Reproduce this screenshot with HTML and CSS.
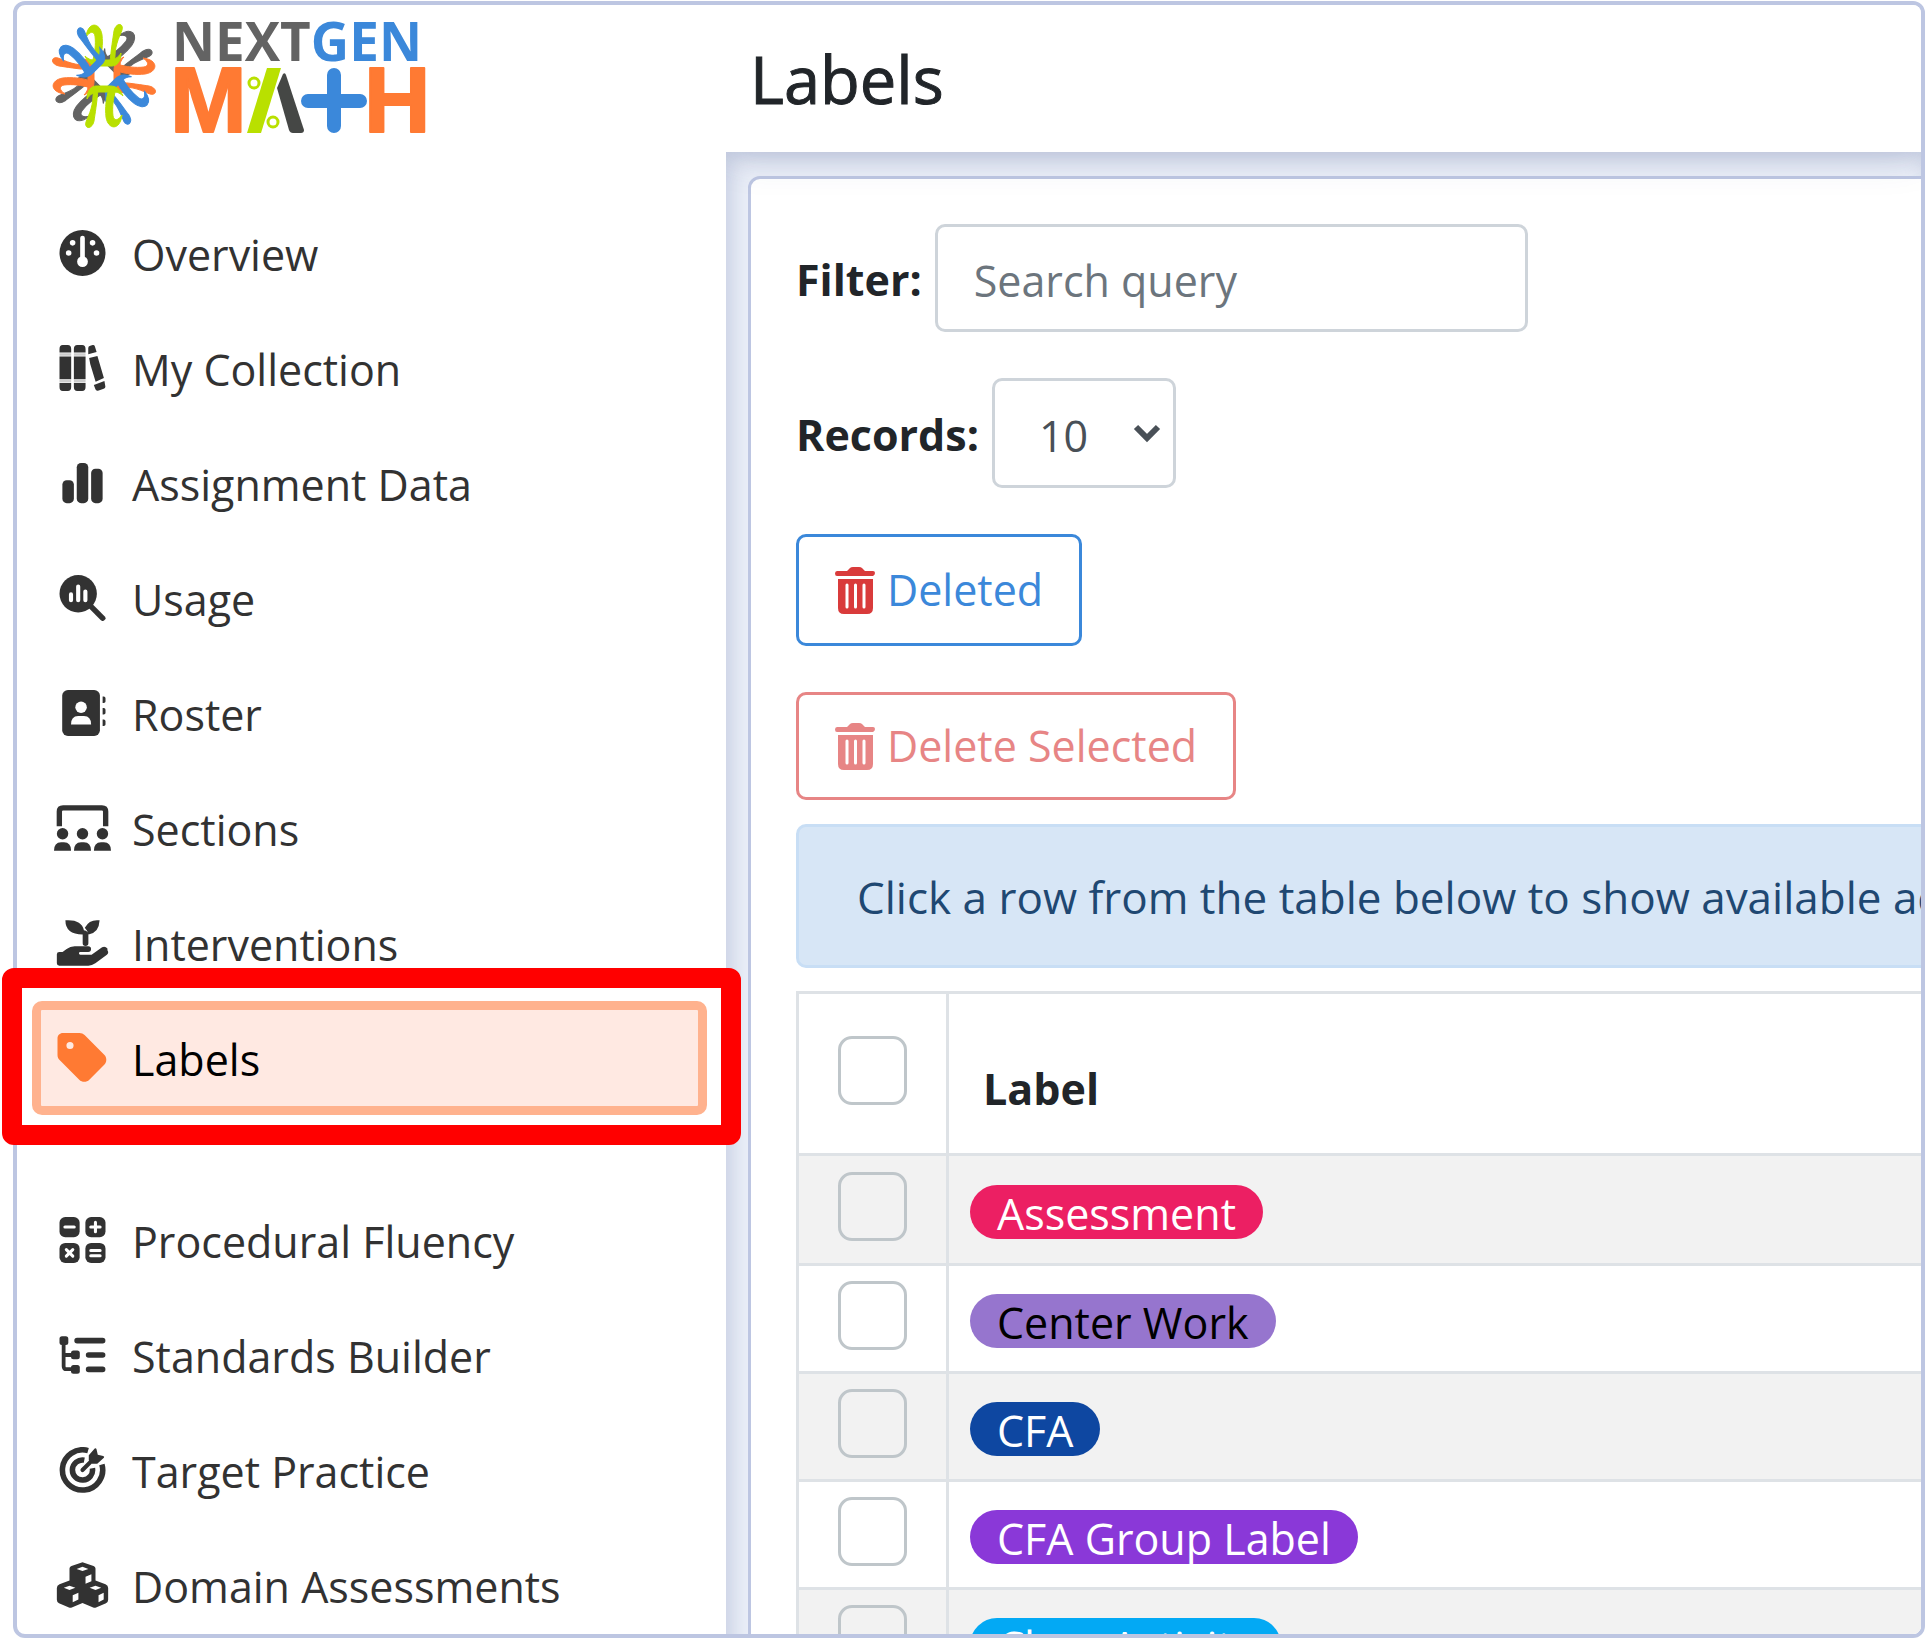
FILE: index.html
```html
<!DOCTYPE html>
<html lang="en">
<head>
    <meta charset="UTF-8">
    <meta name="viewport" content="width=device-width, initial-scale=1.0">
    <title>Labels - NextGen Math</title>
    <link rel="stylesheet" href="styles.css">
</head>
<body>
    <div class="app">
        <aside class="sidebar">
            <a class="logo" href="#" aria-label="NextGen Math">
                <svg width="376" height="120" viewBox="48 16 376 120">
                    <defs>
                        <g id="pi" fill="currentColor" stroke="currentColor" stroke-width="1">
                            <path d="M-5-13C-2-22-1-32-2-41C-4-54-16-55-18-39C-14-45-10-45-9-40C-8-32-9-22-12-13Z"/>
                            <path d="M6-13C7-26 9-38 10-45C12-54 20-53 18-46C15-38 10-30 11-13Z"/>
                            <path d="M-19-20C-15-16-12-16-8-16L4-16C10-16 14-18 17-23C17-15 13-10 8-10L-6-10C-12-10-16-13-19-20Z"/>
                        </g>
                    </defs>
                    <g transform="translate(104 76)">
                        <use href="#pi" color="#636363" transform="rotate(45)"/>
                        <use href="#pi" color="#ff7a33" transform="rotate(90)"/>
                        <use href="#pi" color="#3b88da" transform="rotate(135)"/>
                        <use href="#pi" color="#636363" transform="rotate(225)"/>
                        <use href="#pi" color="#ff7a33" transform="rotate(270)"/>
                        <use href="#pi" color="#b9e000" transform="rotate(180)"/>
                        <use href="#pi" color="#b9e000"/>
                        <use href="#pi" color="#3b88da" transform="rotate(315)"/>
                    </g>
                    <text class="logo-top" x="172" y="61"><tspan fill="#636363">NEXT</tspan><tspan fill="#3b88da">GEN</tspan></text>
                    <text class="logo-bottom" x="170" y="132">M</text>
                    <path d="M267 68h14l-20 65h-14z" fill="#b9e000"/>
                    <circle cx="254" cy="83" r="5" fill="none" stroke="#b9e000" stroke-width="3"/>
                    <circle cx="273" cy="122" r="5" fill="none" stroke="#b9e000" stroke-width="3"/>
                    <path d="M277 88l6-14q2-2 3 1l18 55q0 3-3 3h-8q-3 0-4-3z" fill="#454745"/>
                    <path d="M334 75v51M308 101h52" stroke="#3b88da" stroke-width="14" stroke-linecap="round"/>
                    <text class="logo-bottom" x="364" y="132">H</text>
                </svg>
            </a>
            <nav>
                <ul class="nav-list">
                    <li><a href="#">
                        <svg class="icon" viewBox="0 0 512 512"><circle cx="256" cy="256" r="256"/><g fill="#fff"><circle cx="146" cy="143" r="31"/><circle cx="368" cy="143" r="31"/><circle cx="102" cy="256" r="31"/><circle cx="412" cy="256" r="31"/><circle cx="256" cy="352" r="60"/><rect x="230" y="64" width="52" height="290" rx="26"/></g></svg>
                        <span>Overview</span></a></li>
                    <li><a href="#">
                        <svg class="icon" viewBox="0 0 512 512"><path d="M0 84V44Q0 0 36 0h56q38 0 38 44v40zM0 128h130v254H0zM0 424h130v44q0 44-38 44H36q-36 0-36-44zM160 84V44q0-44 38-44h54q38 0 38 44v40zM160 128h130v254H160zM160 424h130v44q0 44-38 44h-54q-38 0-38-44zM320 104V34q0-20 22-26l28-7q18-3 24 16l19 62zM330 146l92-24 72 246-92 40-60-196zM382 446l118-46 10 58q4 22-18 29l-64 22q-22 4-28-16z"/><path d="M0 92h130v28H0zM160 92h130v28H160zM0 390h130v28H0zM160 390h130v28H160z" fill="#ccc"/></svg>
                        <span>My Collection</span></a></li>
                    <li><a href="#">
                        <svg class="icon" viewBox="0 0 512 512"><rect x="32" y="224" width="128" height="256" rx="48"/><rect x="192" y="32" width="128" height="448" rx="48"/><rect x="352" y="96" width="128" height="384" rx="48"/></svg>
                        <span>Assignment Data</span></a></li>
                    <li><a href="#">
                        <svg class="icon" viewBox="0 0 512 512"><circle cx="208" cy="208" r="208"/><path d="M330 330L480 480" stroke="#323232" stroke-width="62" stroke-linecap="round"/><path d="M128 216v64M208 128v152M288 184v96" stroke="#fff" stroke-width="46" stroke-linecap="round"/></svg>
                        <span>Usage</span></a></li>
                    <li><a href="#">
                        <svg class="icon" viewBox="0 0 512 512"><rect x="30" width="420" height="512" rx="64"/><circle cx="240" cy="192" r="64" fill="#fff"/><path d="M128 384q0-96 80-96h64q80 0 80 96z" fill="#fff"/><path d="M480 72h12q20 0 20 20v36q0 16-20 16h-12zM480 200h12q20 0 20 20v36q0 16-20 16h-12zM480 328h12q20 0 20 20v36q0 16-20 16h-12z"/></svg>
                        <span>Roster</span></a></li>
                    <li><a href="#">
                        <svg class="icon" viewBox="0 0 640 512"><path d="M60 236V72q0-42 42-42h436q42 0 42 42v164" fill="none" stroke="#323232" stroke-width="60"/><circle cx="96" cy="320" r="64"/><circle cx="320" cy="320" r="64"/><circle cx="544" cy="320" r="64"/><path d="M0 512q0-96 80-96h32q80 0 80 96zM224 512q0-96 80-96h32q80 0 80 96zM448 512q0-96 80-96h32q80 0 80 96z"/></svg>
                        <span>Sections</span></a></li>
                    <li><a href="#">
                        <svg class="icon" viewBox="-32 0 640 512"><path d="M96 0h32q150 0 176 112 50 8 50 52v96q0 30-32 30t-32-30V160Q96 160 96 0zM480 0q-6 140-124 160-14-48-42-76Q360 0 450 0zM568 338q20 28-6 50L432 484q-38 28-78 28H28q-28 0-28-28V382q0-26 28-26h36l46-34q40-30 90-30h152q32 0 32 32t-32 32h-88q-16 0-16 16t16 16h126l118-84q36-14 60 14z"/></svg>
                        <span>Interventions</span></a></li>
                    <li class="active"><a href="#">
                        <svg class="icon icon-tag" viewBox="0 32 448 448"><path d="M0 80v149.500c0 17 6.700 33.300 18.700 45.300l176 176c25 25 65.500 25 90.500 0L418.700 317.300c25-25 25-65.500 0-90.500l-176-176c-12-12-28.300-18.700-45.300-18.700H48C21.500 32 0 53.500 0 80zm112 32a32 32 0 1 1 0 64 32 32 0 1 1 0-64z"/></svg>
                        <span>Labels</span></a></li>
                    <li class="group-start"><a href="#">
                        <svg class="icon" viewBox="0 0 512 512"><rect width="224" height="224" rx="64"/><rect x="288" width="224" height="224" rx="64"/><rect y="288" width="224" height="224" rx="64"/><rect x="288" y="288" width="224" height="224" rx="64"/><path d="M60 112h104M348 112h104M400 60v104M76 364l72 72M148 364l-72 72M348 372h104M348 432h104" stroke="#fff" stroke-width="34" stroke-linecap="round"/></svg>
                        <span>Procedural Fluency</span></a></li>
                    <li><a href="#">
                        <svg class="icon" viewBox="0 0 512 512"><rect y="46" width="98" height="98" rx="28"/><rect x="128" y="206" width="98" height="98" rx="28"/><rect x="128" y="366" width="98" height="98" rx="28"/><path d="M46 100v280q0 34 34 34h70M46 256h100" fill="none" stroke="#323232" stroke-width="42"/><path d="M196 96h284M324 256h156M324 416h156" stroke="#323232" stroke-width="62" stroke-linecap="round"/></svg>
                        <span>Standards Builder</span></a></li>
                    <li><a href="#">
                        <svg class="icon" viewBox="0 0 512 512"><path d="M318 40A224 224 0 1 0 472 194M276 146a112 112 0 1 0 90 90" fill="none" stroke="#323232" stroke-width="62"/><path d="M256 256L380 132" stroke="#323232" stroke-width="46" stroke-linecap="round"/><path d="M326 148V92l66-74q14-10 20 8l14 60 60 14q18 6 8 20l-74 66h-56z"/></svg>
                        <span>Target Practice</span></a></li>
                    <li><a href="#">
                        <svg class="icon" viewBox="-32 0 640 512"><path d="M288 0l124 44q22 8 22 28v134l112 42q30 12 30 42v132q0 28-24 38l-112 48q-16 6-32 0l-120-50-120 50q-16 6-32 0L24 460Q0 450 0 422V290q0-30 30-42l112-42V72q0-20 22-28z"/><path d="M222 76l66-24 66 24-66 24zM78 288l64-24 66 24-66 24zM368 288l66-24 64 24-64 24zM322 164l66-28v78l-66 28zM178 372l64-28v76l-64 30zM468 372l58-28v76l-58 30z" fill="#fff"/></svg>
                        <span>Domain Assessments</span></a></li>
                </ul>
            </nav>
        </aside>

        <main class="main">
            <header class="page-header">
                <h1>Labels</h1>
            </header>
            <div class="content">
                <section class="card">
                    <div class="toolbar">
                        <div class="field">
                            <label for="filter">Filter:</label>
                            <input type="text" id="filter" placeholder="Search query">
                        </div>
                        <div class="field">
                            <label for="records">Records:</label>
                            <div class="select-wrap">
                                <select id="records">
                                    <option>10</option>
                                    <option>25</option>
                                    <option>50</option>
                                </select>
                                <svg class="chevron" viewBox="0 0 28 20"><path d="M3 4l11 11L25 4" fill="none" stroke="#495057" stroke-width="6"/></svg>
                            </div>
                        </div>
                        <button type="button" class="btn btn-primary">
                            <svg class="trash" viewBox="0 0 40 47"><path d="M2 4h10l3-3q1-1 3-1h6q2 0 3 1l3 3h8q2 0 2 2t-2 3H2Q0 9 0 6.500T2 4zM3 12h35v29q0 6-6 6H9q-6 0-6-6z"/><path d="M12 18v22M20.500 18v22M29 18v22" stroke="#fff" stroke-width="3" stroke-linecap="round"/></svg>
                            Deleted
                        </button>
                        <button type="button" class="btn btn-danger" disabled>
                            <svg class="trash" viewBox="0 0 40 47"><path d="M2 4h10l3-3q1-1 3-1h6q2 0 3 1l3 3h8q2 0 2 2t-2 3H2Q0 9 0 6.500T2 4zM3 12h35v29q0 6-6 6H9q-6 0-6-6z"/><path d="M12 18v22M20.500 18v22M29 18v22" stroke="#fff" stroke-width="3" stroke-linecap="round"/></svg>
                            Delete Selected
                        </button>
                    </div>

                    <div class="alert">Click a row from the table below to show available actions</div>

                    <table class="labels-table">
                        <thead>
                            <tr>
                                <th class="check"><input type="checkbox" aria-label="Select all"></th>
                                <th>Label</th>
                            </tr>
                        </thead>
                        <tbody>
                            <tr>
                                <td class="check"><input type="checkbox" aria-label="Assessment"></td>
                                <td><span class="badge pink">Assessment</span></td>
                            </tr>
                            <tr>
                                <td class="check"><input type="checkbox" aria-label="Center Work"></td>
                                <td><span class="badge lavender">Center Work</span></td>
                            </tr>
                            <tr>
                                <td class="check"><input type="checkbox" aria-label="CFA"></td>
                                <td><span class="badge navy">CFA</span></td>
                            </tr>
                            <tr>
                                <td class="check"><input type="checkbox" aria-label="CFA Group Label"></td>
                                <td><span class="badge purple">CFA Group Label</span></td>
                            </tr>
                            <tr>
                                <td class="check"><input type="checkbox" aria-label="Class Activity"></td>
                                <td><span class="badge sky">Class Activity</span></td>
                            </tr>
                        </tbody>
                    </table>
                </section>
            </div>
        </main>
    </div>
</body>
</html>
```
FILE: styles.css
```css
* {
    box-sizing: border-box;
}

body {
    margin: 0;
    padding: 1px 0 1px 13px;
    height: 100vh;
    overflow: hidden;
    background: #fff;
    color: #212529;
    font-family: "Segoe UI", "Open Sans", "Noto Sans", sans-serif;
    font-size: 43px;
    line-height: 60px;
}

input, select, button {
    font: inherit;
}

.app {
    display: grid;
    grid-template-columns: 709px 1fr;
    grid-template-rows: minmax(0, 1fr);
    height: 100%;
    border: 4px solid #bdc6e2;
    border-radius: 12px;
}

/* Sidebar */
.sidebar {
    padding: 11px 19px 0 15px;
}

.logo {
    display: block;
    height: 120px;
    margin: 0 0 60px 16px;
}

.logo svg {
    display: block;
    overflow: visible;
}

.logo-top {
    font-size: 53px;
    font-weight: 700;
}

.logo-bottom {
    font-family: "Liberation Sans", sans-serif;
    font-size: 92px;
    font-weight: 700;
    fill: #ff7a33;
    stroke: #ff7a33;
    stroke-width: 2px;
    stroke-linejoin: round;
}

.nav-list {
    list-style: none;
    margin: 0;
    padding: 0;
}

.nav-list li {
    position: relative;
    margin-bottom: 1px;
}

.nav-list a {
    display: flex;
    align-items: center;
    gap: 21px;
    height: 114px;
    padding-left: 13px;
    border: 9px solid transparent;
    border-radius: 10px;
    color: #323232;
    text-decoration: none;
    white-space: nowrap;
}

.nav-list span {
    padding-top: 4px;
}

.nav-list .group-start {
    margin-top: 68px;
}

.nav-list .active a {
    background: #ffe9e2;
    border-color: #ffb28e;
    color: #000;
}

/* highlight around the current page */
.nav-list .active::after {
    content: "";
    position: absolute;
    inset: -33px -34px -30px -30px;
    border: 20px solid #f00;
    border-radius: 12px;
    z-index: 2;
    pointer-events: none;
}

.icon {
    width: 57px;
    height: 46px;
    flex: none;
    fill: #323232;
}

.icon-tag {
    height: 50px;
    fill: #ff7a33;
}

/* Main area */
.main {
    display: flex;
    flex-direction: column;
    min-width: 0;
    overflow: hidden;
    border-radius: 0 8px 8px 0;
}

.page-header {
    flex: none;
    height: 147px;
    padding: 29px 24px;
    background: #fff;
    box-shadow: 0 4px 40px rgba(60, 70, 120, 0.14);
    position: relative;
    z-index: 1;
}

h1 {
    margin: 0;
    font-size: 65px;
    line-height: 90px;
    font-weight: 500;
    -webkit-text-stroke: 1px #212529;
}

.content {
    flex: 1;
    padding: 24px 0 0 22px;
    background: #ebeff8;
    box-shadow: inset 6px 6px 20px rgba(90, 110, 165, 0.25);
}

.card {
    margin-right: -60px;
    padding: 45px;
    background: #fff;
    border: 3px solid #bdc6e2;
    border-radius: 12px;
}

.toolbar {
    display: flex;
    flex-direction: column;
    align-items: flex-start;
    gap: 46px;
}

.field {
    display: flex;
    align-items: center;
    gap: 13px;
}

.field label {
    padding-top: 3px;
    font-weight: 700;
}

.field input,
.field select {
    height: 108px;
    padding: 4px 36px 0;
    border: 3px solid #ced4da;
    border-radius: 10px;
    background: #fff;
    color: #495057;
}

.field input {
    width: 593px;
}

.field input::placeholder {
    color: #6c757d;
    opacity: 1;
}

.select-wrap {
    position: relative;
}

.field select {
    display: block;
    width: 184px;
    height: 110px;
    padding: 6px 44px 0;
    appearance: none;
}

.chevron {
    position: absolute;
    right: 15px;
    top: 45px;
    width: 28px;
    height: 20px;
    pointer-events: none;
}

.btn {
    display: flex;
    align-items: center;
    gap: 12px;
    height: 112px;
    padding: 0 36px;
    border: 3px solid #3b88da;
    border-radius: 10px;
    background: #fff;
    color: #3b88da;
}

.btn-danger {
    height: 108px;
    border-color: #d93b3b;
    color: #d93b3b;
    opacity: 0.62;
}

.trash {
    width: 40px;
    height: 47px;
    fill: #d93b3b;
}

.alert {
    margin: 24px 0 23px;
    padding: 40px 58px 38px;
    border: 3px solid #c8def5;
    border-radius: 10px;
    background: #d7e6f6;
    color: #1f4872;
    font-size: 44px;
    white-space: nowrap;
    overflow: hidden;
}

.labels-table {
    width: 100%;
    border-collapse: collapse;
}

.labels-table th,
.labels-table td {
    height: 108px;
    padding: 4px 21px 0;
    border: 3px solid #dee2e6;
    text-align: left;
}

.labels-table th {
    height: 162px;
    padding: 30px 34px 0;
}

.labels-table tbody tr:first-child td {
    height: 110px;
}

.labels-table .check {
    width: 150px;
    padding: 0 0 6px;
    text-align: center;
}

.labels-table tbody tr:nth-child(odd) {
    background: #f2f2f2;
}

.check input {
    display: block;
    width: 69px;
    height: 69px;
    margin: 0 auto;
    appearance: none;
    border: 3px solid #bfc6ca;
    border-radius: 14px;
}

.badge {
    display: block;
    width: fit-content;
    height: 54px;
    padding: 0 27px;
    border-radius: 27px;
    color: #fff;
    line-height: 58px;
}

.pink {
    background: #ec1f63;
}

.lavender {
    background: #9675ce;
    color: #000;
}

.navy {
    background: #0e47a1;
}

.purple {
    background: #8a38d8;
}

.sky {
    background: #03a9f4;
}
```
